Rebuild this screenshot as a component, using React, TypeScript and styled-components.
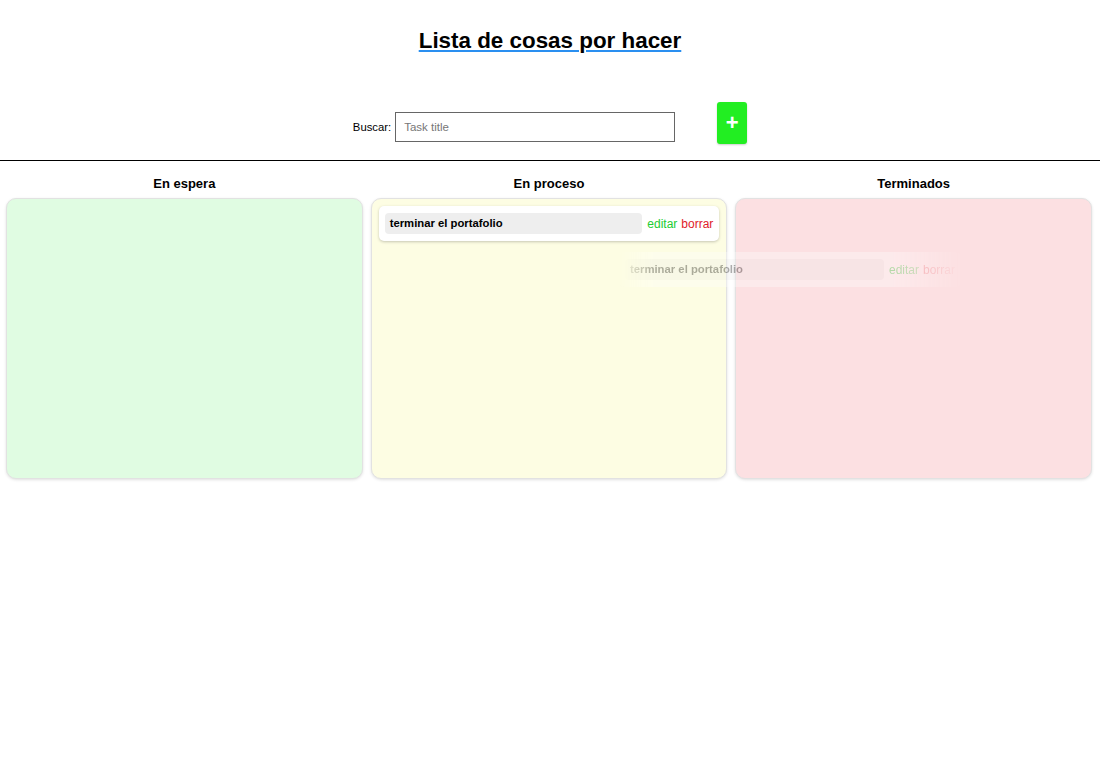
import React from "react";
import styled, { createGlobalStyle } from "styled-components";

const Global = createGlobalStyle`
  html, body { margin: 0; padding: 0; background: #fff; }
  body { font-family: "Liberation Sans", Arial, sans-serif; color: #000; }
`;

const Page = styled.div`
  position: relative;
  display: flow-root;
  width: 1100px;
  min-height: 779px;
`;

const Title = styled.h1`
  margin: 27px 0 0;
  font-size: 22.4px;
  line-height: 28px;
  font-weight: bold;
  text-align: center;
  text-decoration: underline;
  text-decoration-color: #2a8ff0;
  text-decoration-thickness: 2px;
  text-underline-offset: 2px;
`;

const SearchRow = styled.div`
  display: flex;
  justify-content: center;
  align-items: center;
  margin-top: 47px;
  height: 42px;
`;

const Label = styled.label`
  font-size: 11.3px;
  margin-right: 4px;
  margin-top: 8px;
`;

const Input = styled.input`
  box-sizing: border-box;
  width: 280px;
  height: 30px;
  border: 1px solid #666;
  padding: 0 8px;
  font-family: "Liberation Sans", Arial, sans-serif;
  font-size: 11.5px;
  margin-top: 8px;
  outline: none;
  &::placeholder { color: #777; }
`;

const AddButton = styled.button`
  width: 30px;
  height: 42px;
  margin-left: 42px;
  border: none;
  border-radius: 3px;
  background: #22ee22;
  color: #fff;
  font-family: "Liberation Sans", Arial, sans-serif;
  font-size: 22px;
  font-weight: bold;
  padding: 0;
  box-shadow: 0 1px 2px rgba(0,0,0,0.2);
`;

const Divider = styled.hr`
  margin: 16px 0 0;
  border: none;
  border-top: 1px solid #000;
`;

const Board = styled.div`
  display: grid;
  grid-template-columns: repeat(3, 1fr);
  gap: 8px;
  padding: 0 8px 0 6px;
  margin-top: 15px;
`;

const Column = styled.div`
  display: flex;
  flex-direction: column;
`;

const ColumnTitle = styled.h3`
  margin: 0 0 6px;
  font-size: 13px;
  line-height: 16px;
  font-weight: bold;
  text-align: center;
`;

const Panel = styled.div<{ $bg: string }>`
  box-sizing: border-box;
  height: 281px;
  background: ${(p) => p.$bg};
  border: 1px solid #e2e2e2;
  border-radius: 10px;
  box-shadow: 0 1px 3px rgba(0,0,0,0.12);
  padding: 7px 7px;
`;

const Card = styled.div`
  box-sizing: border-box;
  display: flex;
  align-items: center;
  height: 35px;
  padding: 0 6px;
  background: #fff;
  border-radius: 5px;
  box-shadow: 0 1px 3px rgba(0,0,0,0.22);
`;

const CardTitle = styled.div`
  flex: 1;
  height: 21px;
  line-height: 21px;
  background: #eee;
  border-radius: 4px;
  padding: 0 5px;
  font-size: 11.3px;
  font-weight: bold;
  margin-right: 1px;
`;

const Action = styled.span<{ $color: string }>`
  font-size: 12px;
  color: ${(p) => p.$color};
  margin-left: 4px;
`;

const Ghost = styled.div`
  position: absolute;
  left: 619px;
  top: 252px;
  width: 342px;
  opacity: 0.32;
  -webkit-mask-image: linear-gradient(to right, transparent 0%, #000 10%, #000 80%, transparent 100%);
  mask-image: linear-gradient(to right, transparent 0%, #000 10%, #000 80%, transparent 100%);
  pointer-events: none;
`;

const TaskCard = () => (
  <Card>
    <CardTitle>terminar el portafolio</CardTitle>
    <Action $color="#22cc33">editar</Action>
    <Action $color="#e0202a">borrar</Action>
  </Card>
);

export default function App() {
  return (
    <Page>
      <Global />
      <Title>Lista de cosas por hacer</Title>
      <SearchRow>
        <Label>Buscar:</Label>
        <Input placeholder="Task title" />
        <AddButton>+</AddButton>
      </SearchRow>
      <Divider />
      <Board>
        <Column>
          <ColumnTitle>En espera</ColumnTitle>
          <Panel $bg="#e0fce2" />
        </Column>
        <Column>
          <ColumnTitle>En proceso</ColumnTitle>
          <Panel $bg="#fdfde3">
            <TaskCard />
          </Panel>
        </Column>
        <Column>
          <ColumnTitle>Terminados</ColumnTitle>
          <Panel $bg="#fce0e2" />
        </Column>
      </Board>
      <Ghost>
        <TaskCard />
      </Ghost>
    </Page>
  );
}
